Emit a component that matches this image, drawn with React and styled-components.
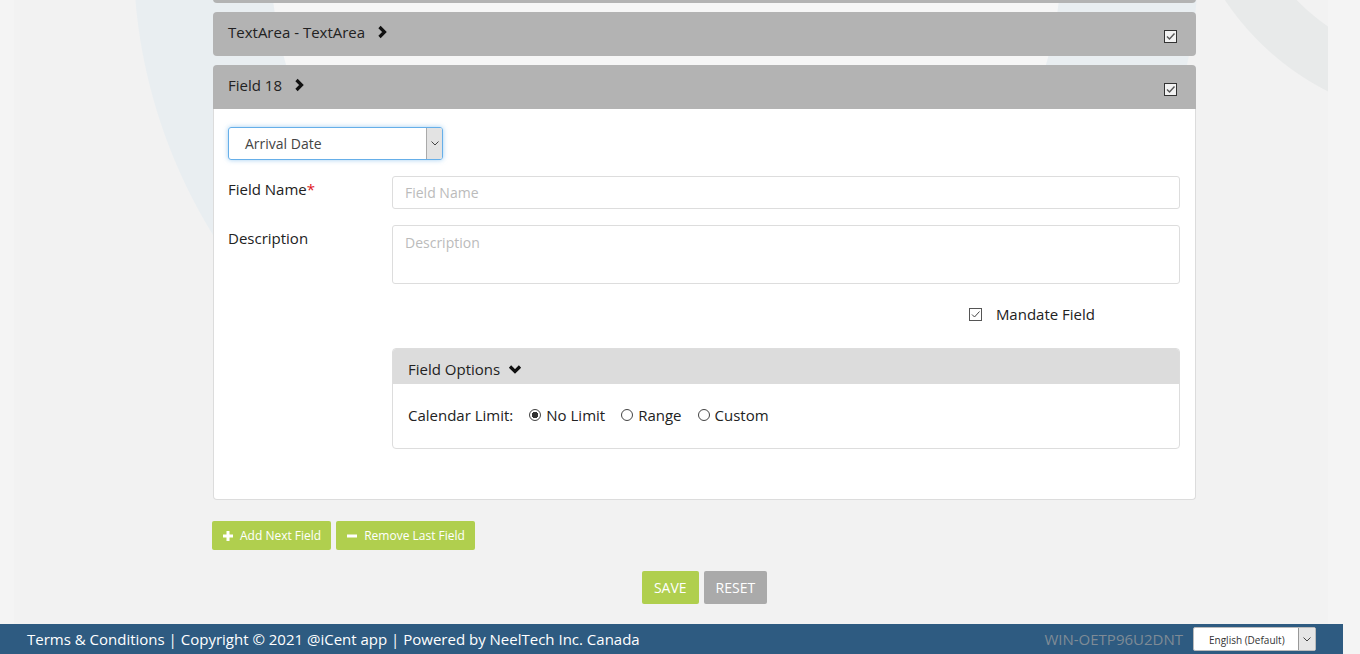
import React from "react";
import styled, { createGlobalStyle } from "styled-components";

const GlobalStyle = createGlobalStyle`
  * { box-sizing: border-box; }
  body {
    margin: 0;
    font-family: "Open Sans", "Liberation Sans", sans-serif;
    background: #f4f4f4;
    color: #222;
    overflow: hidden;
  }
`;

const Chevron = ({ down }) =>
  down ? (
    <svg width="14" height="10" viewBox="0 0 14 10">
      <polyline points="2,2.5 7,7.5 12,2.5" fill="none" stroke="#111" strokeWidth="3.2" />
    </svg>
  ) : (
    <svg width="10" height="14" viewBox="0 0 10 14">
      <polyline points="2.5,2 7.5,7 2.5,12" fill="none" stroke="#111" strokeWidth="3.2" />
    </svg>
  );

const CheckIcon = ({ light }) => (
  <svg width="13" height="13" viewBox="0 0 13 13">
    <rect x="0.5" y="0.5" width="12" height="12" fill={light ? "#fff" : "#f2f2f2"} stroke={light ? "#555" : "#333"} />
    <polyline points="3,6.5 5.5,9 10.5,3.5" fill="none" stroke={light ? "#444" : "#555"} strokeWidth={light ? 1 : 1.4} />
  </svg>
);

const SelectArrow = () => (
  <svg width="8" height="5" viewBox="0 0 8 5">
    <polyline points="0.5,0.5 4,4 7.5,0.5" fill="none" stroke="#444" strokeWidth="1" />
  </svg>
);

const PlusIcon = () => (
  <svg width="10" height="10" viewBox="0 0 10 10">
    <rect x="3.5" y="0" width="3" height="10" fill="#fff" />
    <rect x="0" y="3.5" width="10" height="3" fill="#fff" />
  </svg>
);

const MinusIcon = () => (
  <svg width="10" height="10" viewBox="0 0 10 10">
    <rect x="0" y="3.5" width="10" height="3" fill="#fff" />
  </svg>
);

const fields = ["", "TextArea - TextArea", "Field 18"];

const App = () => {
  return (
    <>
      <GlobalStyle />
      <Screen>
        <Page>
          <Main>
            <Content>
              {fields.map((title, i) => (
                <PanelHeader key={i} first={i === 0} last={i === fields.length - 1}>
                  <Title>
                    {title}
                    {title && <Chevron />}
                  </Title>
                  <HeaderCheck>
                    <CheckIcon />
                  </HeaderCheck>
                </PanelHeader>
              ))}
              <PanelBody>
                <Select>
                  <SelectText>Arrival Date</SelectText>
                  <SelectButton>
                    <SelectArrow />
                  </SelectButton>
                </Select>
                <FormRow>
                  <Label>
                    Field Name<Required>*</Required>
                  </Label>
                  <Input placeholder="Field Name" />
                </FormRow>
                <FormRow>
                  <Label>Description</Label>
                  <TextArea placeholder="Description" />
                </FormRow>
                <MandateRow>
                  <CheckIcon light />
                  <span>Mandate Field</span>
                </MandateRow>
                <Options>
                  <OptionsHeader>
                    Field Options
                    <Chevron down />
                  </OptionsHeader>
                  <OptionsBody>
                    <span>Calendar Limit:</span>
                    <Radio checked>No Limit</Radio>
                    <Radio>Range</Radio>
                    <Radio>Custom</Radio>
                  </OptionsBody>
                </Options>
              </PanelBody>
              <ActionRow>
                <SmallButton>
                  <PlusIcon />
                  Add Next Field
                </SmallButton>
                <SmallButton>
                  <MinusIcon />
                  Remove Last Field
                </SmallButton>
              </ActionRow>
              <SubmitRow>
                <SubmitButton>SAVE</SubmitButton>
                <SubmitButton gray>RESET</SubmitButton>
              </SubmitRow>
            </Content>
          </Main>
          <Footer>
            <FooterText>
              Terms &amp; Conditions | Copyright © 2021 @iCent app | Powered by NeelTech Inc. Canada
            </FooterText>
            <FooterRight>
              <Machine>WIN-OETP96U2DNT</Machine>
              <LangSelect>
                <LangText>English (Default)</LangText>
                <LangButton>
                  <SelectArrow />
                </LangButton>
              </LangSelect>
            </FooterRight>
          </Footer>
        </Page>
        <ScrollTrack />
      </Screen>
    </>
  );
};

const Radio = ({ checked, children }) => (
  <RadioLabel>
    <RadioDot checked={checked} />
    {children}
  </RadioLabel>
);

export default App;

const Screen = styled.div`
  display: flex;
  width: 1360px;
  height: 654px;
`;

const Page = styled.div`
  width: 1343px;
  display: flex;
  flex-direction: column;
`;

const ScrollTrack = styled.div`
  flex: 1;
  background: #f4f4f4;
`;

const Main = styled.main`
  flex: 1;
  margin: 0 15px 0 14px;
  overflow: hidden;
  background:
    radial-gradient(circle at 1436px -150px, transparent 214px, #e8eaea 215px, #e8eaea 270px, transparent 271px),
    radial-gradient(circle at 652px -45px, #f6f6f6 395px, #e9eef1 396px, #e9eef1 532px, transparent 533px),
    #f2f2f2;
`;

const Content = styled.div`
  width: 983px;
  margin-left: 199px;
  display: flex;
  flex-direction: column;
`;

const PanelHeader = styled.div`
  height: 44px;
  margin-top: ${({ first }) => (first ? "-41px" : "0")};
  margin-bottom: ${({ last }) => (last ? "0" : "9px")};
  background: #b3b3b3;
  border-radius: ${({ last }) => (last ? "4px 4px 0 0" : "4px")};
  display: flex;
  align-items: center;
  justify-content: space-between;
  padding: 0 19px 0 15px;
`;

const Title = styled.div`
  display: flex;
  align-items: center;
  gap: 12px;
  font-size: 15px;
  color: #222;
  margin-top: -4px;
`;

const HeaderCheck = styled.div`
  display: flex;
  margin-top: 4px;
`;

const PanelBody = styled.div`
  background: #fff;
  border: 1px solid #dcdcdc;
  border-top: none;
  border-radius: 0 0 4px 4px;
  padding: 18px 15px 50px 14px;
  display: flex;
  flex-direction: column;
`;

const Select = styled.div`
  width: 215px;
  height: 33px;
  border: 1px solid #66afe9;
  border-radius: 3px;
  box-shadow: 0 0 5px rgba(102, 175, 233, 0.6);
  display: flex;
  align-items: stretch;
  margin-bottom: 16px;
  overflow: hidden;
`;

const SelectText = styled.div`
  flex: 1;
  display: flex;
  align-items: center;
  padding-left: 16px;
  font-size: 14px;
  color: #444;
`;

const SelectButton = styled.div`
  width: 16px;
  background: #e3e3e3;
  border-left: 1px solid #aaa;
  display: flex;
  align-items: center;
  justify-content: center;
`;

const FormRow = styled.div`
  display: flex;
  align-items: flex-start;
  margin-bottom: 16px;
`;

const Label = styled.div`
  width: 164px;
  font-size: 15px;
  color: #222;
  padding-top: 3px;
`;

const Required = styled.span`
  color: #e0161c;
`;

const Input = styled.input`
  flex: 1;
  height: 33px;
  border: 1px solid #ddd;
  border-radius: 3px;
  padding: 0 12px;
  font-family: inherit;
  font-size: 14px;
  outline: none;
  &::placeholder {
    color: #bbb;
  }
`;

const TextArea = styled.textarea`
  flex: 1;
  height: 59px;
  border: 1px solid #ddd;
  border-radius: 3px;
  padding: 7px 12px;
  font-family: inherit;
  font-size: 14px;
  resize: none;
  outline: none;
  &::placeholder {
    color: #bbb;
  }
`;

const MandateRow = styled.div`
  display: flex;
  align-items: center;
  justify-content: flex-end;
  gap: 14px;
  padding-right: 85px;
  height: 28px;
  font-size: 15px;
  color: #222;
  margin-bottom: 20px;
`;

const Options = styled.div`
  margin-left: 164px;
  border: 1px solid #ddd;
  border-radius: 4px;
  overflow: hidden;
`;

const OptionsHeader = styled.div`
  height: 35px;
  background: #dcdcdc;
  display: flex;
  align-items: center;
  gap: 8px;
  padding: 4px 15px 0;
  font-size: 15px;
  color: #222;
`;

const OptionsBody = styled.div`
  height: 64px;
  display: flex;
  align-items: center;
  padding: 0 15px 2px;
  gap: 15px;
  font-size: 15px;
  color: #222;
`;

const RadioLabel = styled.label`
  display: flex;
  align-items: center;
  gap: 5px;
  margin-left: 1px;
`;

const RadioDot = styled.span`
  width: 12px;
  height: 12px;
  border-radius: 50%;
  border: 1px solid #444;
  background: ${({ checked }) =>
    checked ? "radial-gradient(circle, #333 0 3px, #fff 3.5px)" : "#fff"};
`;

const ActionRow = styled.div`
  display: flex;
  gap: 5px;
  margin: 21px 0 0 -1px;
`;

const SmallButton = styled.button`
  height: 29px;
  padding: 0 10px 0 11px;
  border: none;
  border-radius: 2px;
  background: #b0cf4e;
  color: #fff;
  font-family: inherit;
  font-size: 12px;
  display: flex;
  align-items: center;
  gap: 7px;
`;

const SubmitRow = styled.div`
  display: flex;
  justify-content: center;
  gap: 5px;
  margin-top: 21px;
`;

const SubmitButton = styled.button`
  height: 33px;
  padding: 0 12px;
  border: none;
  border-radius: 2px;
  background: ${({ gray }) => (gray ? "#aaaaaa" : "#b0cf4e")};
  color: #fff;
  font-family: inherit;
  font-size: 14px;
`;

const Footer = styled.footer`
  height: 30px;
  background: #2e5b81;
  display: flex;
  align-items: center;
  justify-content: space-between;
  padding: 0 27px;
`;

const FooterText = styled.div`
  color: #fff;
  font-size: 15px;
`;

const FooterRight = styled.div`
  display: flex;
  align-items: center;
  gap: 10px;
`;

const Machine = styled.div`
  color: #7f8b96;
  font-size: 15px;
`;

const LangSelect = styled.div`
  width: 123px;
  height: 24px;
  background: #fff;
  border: 1px solid #bbb;
  border-radius: 2px;
  display: flex;
  overflow: hidden;
`;

const LangText = styled.div`
  flex: 1;
  font-size: 10px;
  color: #333;
  display: flex;
  align-items: center;
  padding: 2px 0 0 15px;
`;

const LangButton = styled.div`
  width: 17px;
  background: #e6e6e6;
  border-left: 1px solid #999;
  display: flex;
  align-items: center;
  justify-content: center;
`;
